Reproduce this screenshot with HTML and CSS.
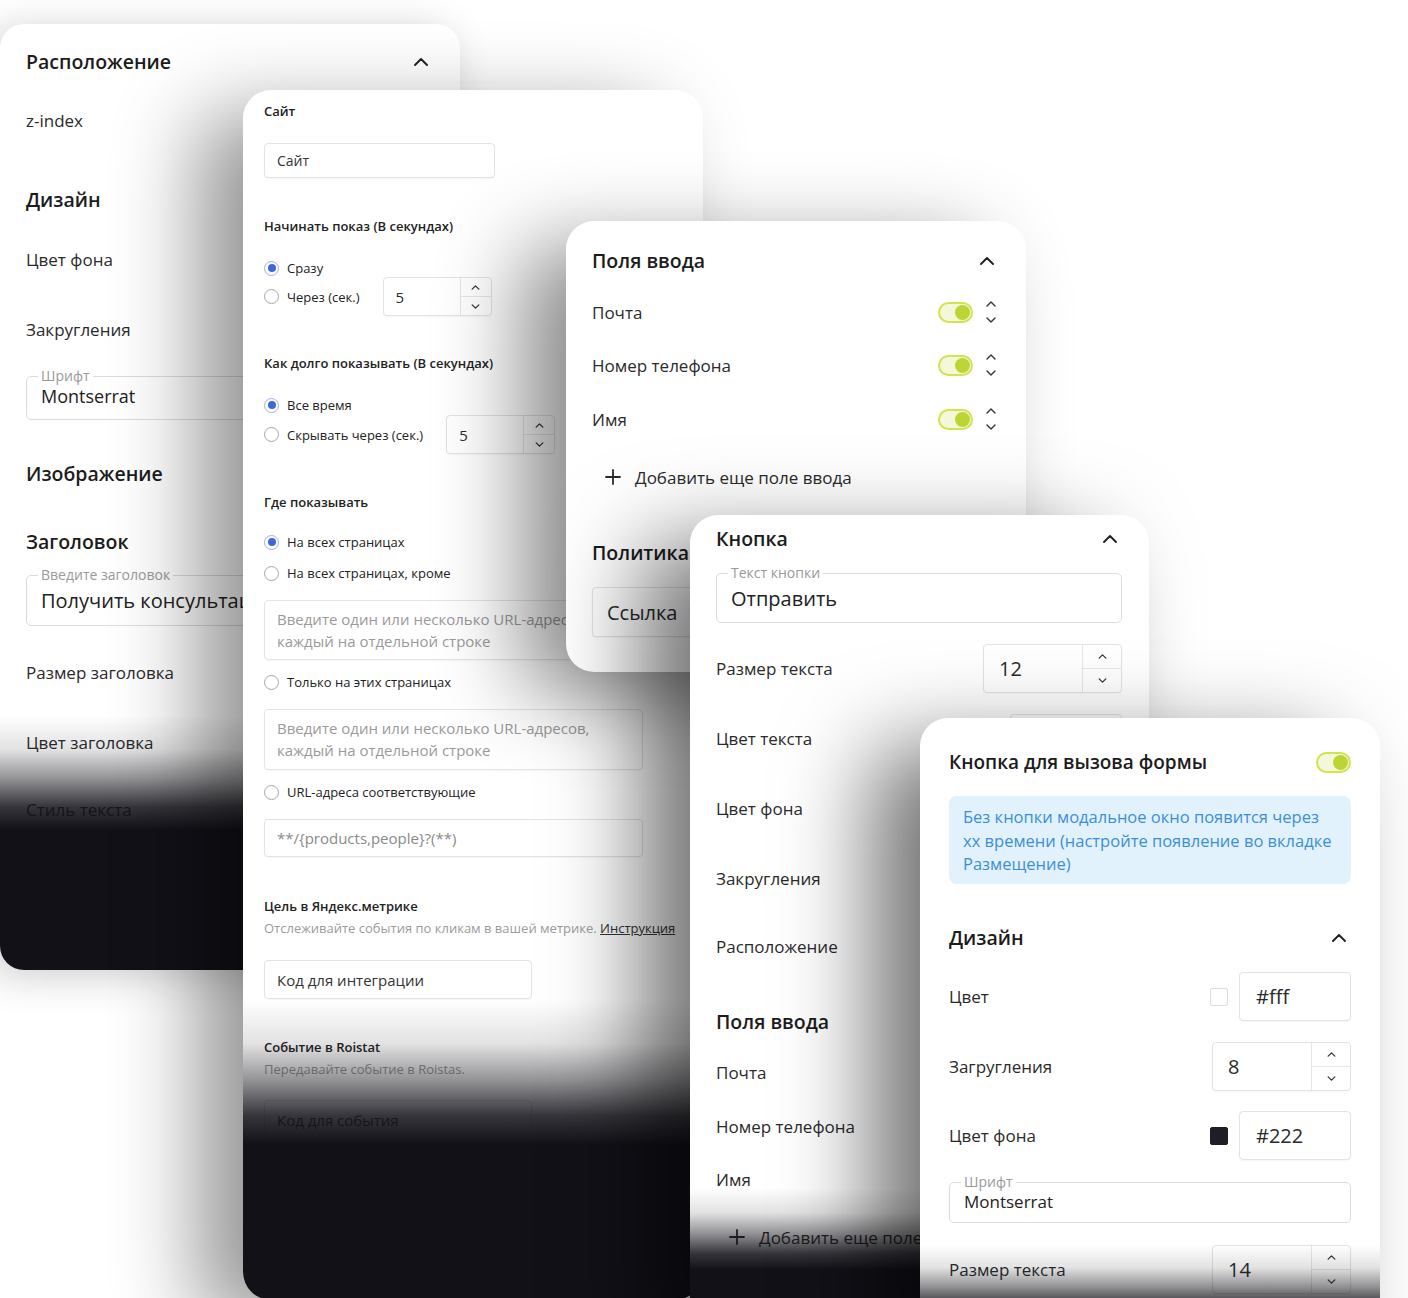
FILE: index.html
```html
<!DOCTYPE html>
<html lang="ru">
<head>
<meta charset="utf-8">
<title>Настройки формы</title>
<link rel="stylesheet" href="styles.css">
</head>
<body>
<div class="canvas">

  <!-- Card 1 -->
  <section class="card card-1">
    <div class="row h40"><h2 class="sec">Расположение</h2><svg class="chev" viewBox="0 0 14 8"><path d="M1 7L7 1l6 6"/></svg></div>
    <div class="row h40 mt18 lbl">z-index</div>
    <div class="row h40 mt40"><h2 class="sec">Дизайн</h2></div>
    <div class="row h40 mt19 lbl">Цвет фона</div>
    <div class="row h40 mt30 lbl">Закругления</div>
    <fieldset class="fs mt19"><legend>Шрифт</legend><div class="fs-val">Montserrat</div></fieldset>
    <div class="row h40 mt34"><h2 class="sec">Изображение</h2></div>
    <div class="row h40 mt28"><h2 class="sec">Заголовок</h2></div>
    <fieldset class="fs fs-big mt5"><legend>Введите заголовок</legend><div class="fs-val">Получить консультацию</div></fieldset>
    <div class="row h40 mt26 lbl">Размер заголовка</div>
    <div class="row h40 mt30 lbl">Цвет заголовка</div>
    <div class="row h40 mt27 lbl">Стиль текста</div>
  </section>

  <!-- Card 2 -->
  <section class="card card-2">
    <div class="row h20 flabel">Сайт</div>
    <div class="inp inp-site mt22">Сайт</div>
    <div class="row h20 mt38 flabel">Начинать показ (В секундах)</div>
    <div class="row-l h18 mt23 opt"><span class="radio on"></span>Сразу</div>
    <div class="row-l h39">
      <span class="opt"><span class="radio"></span>Через (сек.)</span>
      <div class="num num-sm"><div class="num-val">5</div><div class="num-step"><span><svg class="mini" viewBox="0 0 10 6"><path d="M1 5l4-4 4 4"/></svg></span><span><svg class="mini" viewBox="0 0 10 6"><path d="M1 1l4 4 4-4"/></svg></span></div></div>
    </div>
    <div class="row h20 mt37 flabel">Как долго показывать (В секундах)</div>
    <div class="row-l h18 mt23 opt"><span class="radio on"></span>Все время</div>
    <div class="row-l h39 mt1">
      <span class="opt"><span class="radio"></span>Скрывать через (сек.)</span>
      <div class="num num-sm"><div class="num-val">5</div><div class="num-step"><span><svg class="mini" viewBox="0 0 10 6"><path d="M1 5l4-4 4 4"/></svg></span><span><svg class="mini" viewBox="0 0 10 6"><path d="M1 1l4 4 4-4"/></svg></span></div></div>
    </div>
    <div class="row h20 mt38 flabel">Где показывать</div>
    <div class="row-l h18 mt21 opt"><span class="radio on"></span>На всех страницах</div>
    <div class="row-l h18 mt13 opt"><span class="radio"></span>На всех страницах, кроме</div>
    <div class="ta mt18">Введите один или несколько URL-адресов,<br>каждый на отдельной строке</div>
    <div class="row-l h18 mt13 opt"><span class="radio"></span>Только на этих страницах</div>
    <div class="ta ta-2 mt18">Введите один или несколько URL-адресов,<br>каждый на отдельной строке</div>
    <div class="row-l h18 mt13 opt"><span class="radio"></span>URL-адреса соответствующие</div>
    <div class="inp inp-wide mt18">**/{products,people}?(**)</div>
    <div class="row h20 mt39 flabel">Цель в Яндекс.метрике</div>
    <div class="row-l h20 mt2 desc">Отслеживайте события по кликам в вашей метрике.&nbsp;<a href="#">Инструкция</a></div>
    <div class="inp inp-code mt22">Код для интеграции</div>
    <div class="row h20 mt38 flabel">Событие в Roistat</div>
    <div class="row-l h20 mt2 desc">Передавайте событие в Roistas.</div>
    <div class="inp inp-code mt21">Код для события</div>
  </section>

  <!-- Card 3 -->
  <section class="card card-3">
    <div class="row h40"><h2 class="sec">Поля ввода</h2><svg class="chev mr3" viewBox="0 0 14 8"><path d="M1 7L7 1l6 6"/></svg></div>
    <div class="row h30 mt16"><span class="lbl">Почта</span><span class="ctrls"><span class="toggle"></span><svg class="sorter" viewBox="0 0 12 26"><path d="M2 7l4-4 4 4M2 19l4 4 4-4"/></svg></span></div>
    <div class="row h30 mt23"><span class="lbl">Номер телефона</span><span class="ctrls"><span class="toggle"></span><svg class="sorter" viewBox="0 0 12 26"><path d="M2 7l4-4 4 4M2 19l4 4 4-4"/></svg></span></div>
    <div class="row h30 mt24"><span class="lbl">Имя</span><span class="ctrls"><span class="toggle"></span><svg class="sorter" viewBox="0 0 12 26"><path d="M2 7l4-4 4 4M2 19l4 4 4-4"/></svg></span></div>
    <div class="add h30 mt28"><svg class="plus" viewBox="0 0 16 16"><path d="M8 1v14M1 8h14"/></svg>Добавить еще поле ввода</div>
    <div class="row h40 mt41"><h2 class="sec">Политика</h2></div>
    <div class="inp inp-link mt14">Ссылка</div>
  </section>

  <!-- Card 4 -->
  <section class="card card-4">
    <div class="row h40"><h2 class="sec">Кнопка</h2><svg class="chev mr5" viewBox="0 0 14 8"><path d="M1 7L7 1l6 6"/></svg></div>
    <fieldset class="fs fs-big fs-btn mt6"><legend>Текст кнопки</legend><div class="fs-val">Отправить</div></fieldset>
    <div class="row h49 mt21"><span class="lbl">Размер текста</span>
      <div class="num num-big"><div class="num-val">12</div><div class="num-step"><span><svg class="mini" viewBox="0 0 10 6"><path d="M1 5l4-4 4 4"/></svg></span><span><svg class="mini" viewBox="0 0 10 6"><path d="M1 1l4 4 4-4"/></svg></span></div></div>
    </div>
    <div class="row h49 mt21"><span class="lbl">Цвет текста</span><span class="rgrp"><span class="swatch dark"></span><span class="inp inp-color"></span></span></div>
    <div class="row h49 mt21"><span class="lbl">Цвет фона</span><span class="rgrp"><span class="swatch"></span><span class="inp inp-color"></span></span></div>
    <div class="row h49 mt21"><span class="lbl">Закругления</span>
      <div class="num num-big"><div class="num-val"></div><div class="num-step"><span></span><span></span></div></div>
    </div>
    <div class="row h40 mt23 lbl">Расположение</div>
    <div class="row h40 mt36"><h2 class="sec">Поля ввода</h2></div>
    <div class="row h30 mt15 lbl">Почта</div>
    <div class="row h30 mt24 lbl">Номер телефона</div>
    <div class="row h30 mt23 lbl">Имя</div>
    <div class="add h30 mt28"><svg class="plus" viewBox="0 0 16 16"><path d="M8 1v14M1 8h14"/></svg>Добавить еще поле ввода</div>
  </section>

  <!-- Card 5 -->
  <section class="card card-5">
    <div class="row h40"><h2 class="sec sec-19">Кнопка для вызова формы</h2><span class="toggle"></span></div>
    <div class="info mt14">Без кнопки модальное окно появится через<br>xx времени (настройте появление во вкладке<br>Размещение)</div>
    <div class="row h40 mt34"><h2 class="sec">Дизайн</h2><svg class="chev mr5" viewBox="0 0 14 8"><path d="M1 7L7 1l6 6"/></svg></div>
    <div class="row h49 mt14"><span class="lbl">Цвет</span><span class="rgrp"><span class="swatch"></span><span class="inp inp-color">#fff</span></span></div>
    <div class="row h49 mt21"><span class="lbl">Загругления</span>
      <div class="num num-big"><div class="num-val">8</div><div class="num-step"><span><svg class="mini" viewBox="0 0 10 6"><path d="M1 5l4-4 4 4"/></svg></span><span><svg class="mini" viewBox="0 0 10 6"><path d="M1 1l4 4 4-4"/></svg></span></div></div>
    </div>
    <div class="row h49 mt20"><span class="lbl">Цвет фона</span><span class="rgrp"><span class="swatch dark"></span><span class="inp inp-color">#222</span></span></div>
    <fieldset class="fs fs-5 mt14"><legend>Шрифт</legend><div class="fs-val">Montserrat</div></fieldset>
    <div class="row h49 mt22"><span class="lbl">Размер текста</span>
      <div class="num num-big"><div class="num-val">14</div><div class="num-step"><span><svg class="mini" viewBox="0 0 10 6"><path d="M1 5l4-4 4 4"/></svg></span><span><svg class="mini" viewBox="0 0 10 6"><path d="M1 1l4 4 4-4"/></svg></span></div></div>
    </div>
  </section>

</div>
</body>
</html>
```

FILE: styles.css
```css
* { box-sizing: border-box; }
html, body { margin: 0; padding: 0; }
body {
  background: #fff;
  font-family: "Open Sans", "Noto Sans", Arial, sans-serif;
  color: #242424;
}
.canvas {
  position: relative;
  width: 1408px;
  height: 1298px;
  overflow: hidden;
  background: #fff;
}

/* ---------- cards ---------- */
.card {
  position: absolute;
  background: #fff;
  border-radius: 28px;
  overflow: hidden;
  box-shadow: -48px 28px 90px rgba(0, 0, 0, 0.55);
  display: flex;
  flex-direction: column;
}
.card > * { flex-shrink: 0; }
.card::after {
  content: "";
  position: absolute;
  left: 0;
  right: 0;
  bottom: 0;
  top: var(--fade-top);
  background: linear-gradient(to bottom,
    rgba(18, 17, 24, 0) 0,
    rgba(18, 17, 24, 0.12) calc(var(--fade) * 0.3),
    rgba(18, 17, 24, 0.45) calc(var(--fade) * 0.55),
    rgba(18, 17, 24, 0.85) calc(var(--fade) * 0.8),
    #121118 var(--fade));
  pointer-events: none;
}
.card-1 {
  left: 0; top: 24px; width: 460px; height: 946px;
  padding: 18px 32px 0 26px;
  border-radius: 24px;
  box-shadow: -10px 6px 40px rgba(0, 0, 0, 0.2);
  --fade-top: 691px; --fade: 115px;
  z-index: 1;
}
.card-2 {
  left: 243px; top: 90px; width: 460px; height: 1210px;
  padding: 11px 20px 0 21px;
  box-shadow: -44px 24px 84px rgba(0, 0, 0, 0.42);
  --fade-top: 910px; --fade: 145px;
  z-index: 2;
}
.card-3 {
  left: 566px; top: 221px; width: 460px; height: 451px;
  padding: 20px 29px 0 26px;
  box-shadow: -44px 24px 84px rgba(0, 0, 0, 0.45);
  z-index: 3;
}
.card-3::after { display: none; }
.card-4 {
  left: 690px; top: 515px; width: 459px; height: 820px;
  padding: 4px 27px 0 26px;
  --fade-top: 673px; --fade: 82px;
  z-index: 4;
}
.card-5 {
  left: 920px; top: 718px; width: 460px; height: 640px;
  padding: 24px 29px 0 29px;
  --fade-top: 527px; --fade: 75px;
  z-index: 5;
}

/* ---------- rows & spacing ---------- */
.row { display: flex; align-items: center; justify-content: space-between; }
.row-l { display: flex; align-items: center; }
.h18 { height: 18px; }
.h20 { height: 20px; }
.h30 { height: 30px; }
.h39 { height: 39px; }
.h40 { height: 40px; }
.h49 { height: 49px; }
.mt1 { margin-top: 1px; }
.mt2 { margin-top: 2px; }
.mt5 { margin-top: 5px; }
.mt6 { margin-top: 6px; }
.mt13 { margin-top: 13px; }
.mt14 { margin-top: 14px; }
.mt15 { margin-top: 15px; }
.mt16 { margin-top: 16px; }
.mt18 { margin-top: 18px; }
.mt19 { margin-top: 19px; }
.mt20 { margin-top: 20px; }
.mt21 { margin-top: 21px; }
.mt22 { margin-top: 22px; }
.mt23 { margin-top: 23px; }
.mt24 { margin-top: 24px; }
.mt26 { margin-top: 26px; }
.mt27 { margin-top: 27px; }
.mt28 { margin-top: 28px; }
.mt30 { margin-top: 30px; }
.mt34 { margin-top: 34px; }
.mt36 { margin-top: 36px; }
.mt37 { margin-top: 37px; }
.mt38 { margin-top: 38px; }
.mt39 { margin-top: 39px; }
.mt40 { margin-top: 40px; }
.mt41 { margin-top: 41px; }
.mr3 { margin-right: 3px; }
.mr5 { margin-right: 5px; }

/* ---------- typography ---------- */
.sec {
  margin: 0;
  font-size: 19.5px;
  font-weight: 600;
  line-height: 1;
  color: #1c1c1c;
}
.sec-19 { font-size: 19px; }
.lbl { font-size: 17px; color: #2a2a2a; white-space: nowrap; }
.flabel { font-size: 13px; font-weight: 600; color: #222; }
.opt {
  display: flex;
  align-items: center;
  gap: 8px;
  font-size: 13px;
  color: #222;
  white-space: nowrap;
}
.desc { font-size: 13px; color: #9b9b9b; white-space: nowrap; }
.desc a { color: #333; text-decoration: underline; }

/* ---------- icons ---------- */
.chev {
  width: 14px;
  height: 8px;
  fill: none;
  stroke: #222;
  stroke-width: 1.9;
  stroke-linecap: round;
  stroke-linejoin: round;
}
.mini {
  width: 9px;
  height: 5px;
  fill: none;
  stroke: #333;
  stroke-width: 1.5;
  stroke-linecap: round;
  stroke-linejoin: round;
}
.sorter {
  width: 12px;
  height: 26px;
  fill: none;
  stroke: #333;
  stroke-width: 1.4;
  stroke-linecap: round;
  stroke-linejoin: round;
}
.plus {
  width: 16px;
  height: 16px;
  fill: none;
  stroke: #2a2a2a;
  stroke-width: 1.8;
  stroke-linecap: round;
}

/* ---------- controls ---------- */
.radio {
  width: 15px;
  height: 15px;
  border-radius: 50%;
  border: 1.5px solid #a6a6a6;
  display: flex;
  align-items: center;
  justify-content: center;
  flex-shrink: 0;
  background: #fff;
}
.radio.on { border-color: #a3afec; }
.radio.on::after {
  content: "";
  width: 8px;
  height: 8px;
  border-radius: 50%;
  background: #3f66dc;
}

.inp {
  display: flex;
  align-items: center;
  border: 1px solid #e3e3e3;
  border-radius: 4px;
  background: #fff;
  padding: 0 12px;
  font-size: 14px;
  color: #333;
  white-space: nowrap;
  box-shadow: 0 1px 2px rgba(0, 0, 0, 0.04);
}
.inp-site { width: 231px; height: 35px; }
.inp-wide { width: 379px; height: 38px; font-size: 15px; color: #8a8a8a; }
.inp-code { width: 268px; height: 39px; font-size: 15px; color: #333; }
.inp-link { height: 50px; padding-left: 14px; font-size: 20px; color: #2a2a2a; }
.inp-color { width: 112px; height: 49px; padding-left: 16px; font-size: 20px; color: #2a2a2a; }

.ta {
  width: 379px;
  height: 60px;
  border: 1px solid #e4e4e4;
  border-radius: 4px;
  padding: 7px 12px 0;
  font-size: 15px;
  line-height: 22px;
  color: #9a9a9a;
  white-space: nowrap;
  box-shadow: 0 1px 2px rgba(0, 0, 0, 0.04);
}
.ta-2 { height: 61px; }

.num {
  display: flex;
  border: 1px solid #e3e3e3;
  border-radius: 4px;
  background: #fff;
  box-shadow: 0 1px 2px rgba(0, 0, 0, 0.04);
}
.num-val {
  flex: 1;
  display: flex;
  align-items: center;
  padding-left: 12px;
  font-size: 15px;
  color: #2a2a2a;
}
.num-step {
  width: 31px;
  border-left: 1px solid #e6e6e6;
  display: flex;
  flex-direction: column;
}
.num-step span {
  flex: 1;
  display: flex;
  align-items: center;
  justify-content: center;
}
.num-step span + span { border-top: 1px solid #e6e6e6; }
.num-sm { width: 109px; height: 39px; margin-left: 23px; }
.num-big { width: 139px; height: 49px; }
.num-big .num-val { font-size: 20px; padding-left: 15px; }
.num-big .num-step { width: 39px; }

.ctrls { display: flex; align-items: center; gap: 12px; }
.toggle {
  width: 35px;
  height: 21px;
  border-radius: 11px;
  border: 2px solid #d3e24f;
  background: #f4f8d9;
  display: flex;
  align-items: center;
  justify-content: flex-end;
  padding: 0 1px;
  flex-shrink: 0;
}
.toggle::after {
  content: "";
  width: 15px;
  height: 15px;
  border-radius: 50%;
  background: #bcd534;
}

.add {
  display: flex;
  align-items: center;
  gap: 14px;
  padding-left: 13px;
  font-size: 17px;
  color: #2a2a2a;
  white-space: nowrap;
}

.rgrp { display: flex; align-items: center; gap: 11px; }
.swatch {
  width: 18px;
  height: 18px;
  border: 1px solid #dedede;
  border-radius: 2px;
  background: #fff;
}
.swatch.dark { background: #1f1e26; border-color: #1f1e26; }

/* ---------- fieldsets ---------- */
.fs {
  margin-left: 0;
  margin-right: 0;
  margin-bottom: 0;
  min-width: 0;
  border: 1px solid #dcdcdc;
  border-radius: 5px;
  padding: 0 14px 11px;
}
.fs legend {
  padding: 0 3px;
  margin-left: -3px;
  font-size: 14px;
  line-height: 16px;
  color: #999;
}
.fs-val {
  font-size: 18px;
  line-height: 24px;
  color: #222;
  white-space: nowrap;
}
.fs-big { padding-bottom: 10px; }
.fs-big .fs-val { font-size: 20px; line-height: 28px; margin-top: 4px; }
.fs-btn { padding-bottom: 9px; }
.fs-5 { padding-bottom: 8px; }
.fs-5 .fs-val { font-size: 17px; }

/* ---------- info ---------- */
.info {
  height: 88px;
  background: #e2f2fc;
  border-radius: 8px;
  padding: 9px 14px 0;
  font-size: 16.5px;
  line-height: 23.5px;
  color: #3b8fd6;
  white-space: nowrap;
}
```
